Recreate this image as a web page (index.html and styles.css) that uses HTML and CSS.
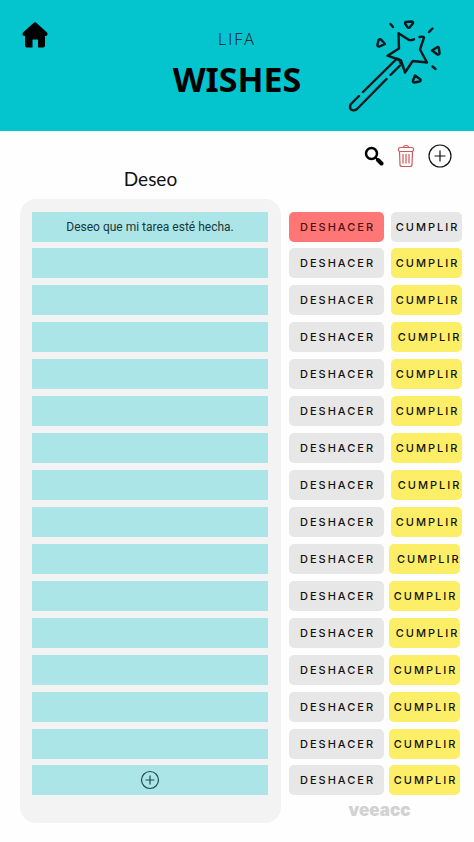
FILE: index.html
```html
<!DOCTYPE html>
<html lang="es">
<head>
<meta charset="UTF-8">
<meta name="viewport" content="width=device-width, initial-scale=1">
<title>LIFA Wishes</title>
<link rel="stylesheet" href="styles.css">
</head>
<body>
<header class="header">
  <a class="home" href="#" aria-label="Inicio">
    <svg width="26" height="26" viewBox="0 0 26 26">
      <path d="M14.500 1 L25 10.500 Q26.500 13.500 23.500 14 H23 V23.500 Q23 25.500 21 25.500 H16 V17.500 H10.500 V25.500 H5 Q3 25.500 3 23.500 V14 H2.500 Q-0.500 13.500 1 10.500 L11.500 1 Q13 -0.300 14.500 1 Z"/>
    </svg>
  </a>
  <div class="brand">
    <p class="brand-name">LIFA</p>
    <h1 class="title">WISHES</h1>
  </div>
  <svg class="wand" width="94" height="94" viewBox="0 0 94 94">
    <!-- star -->
    <path d="M66 21.300 Q63 22.500 61 22 L50.500 15.300 L51 30.500 L39.500 37.700 L53 42.500 L57 54.500 L64.700 43 L79 44.500 L72 31.500 L76 19.500 Q75 18 71.500 19"/>
    <!-- handle -->
    <path d="M47.500 42 L15 74 M11 78 L3 86 Q1 89 3 91.500 Q6 93.500 9 91 L38.500 61 M42.500 57 L52 47.500 M48 41 Q51 40 52.500 45"/>
    <!-- sparkles -->
    <path d="M57.500 4 L64 3.500 Q66 4.500 64.500 6 L61.500 9.500 Q60 10.500 59 8.500 L57 5.500 Z"/>
    <path d="M30.500 22 Q32 20.500 33.500 22 L37 26 L31.500 28.500 Q29 29 29.500 26.500 Z"/>
    <path d="M84 32.500 L89.500 29 Q91 29 91 31 L91.500 35 Q91.500 37 89.500 36.500 Z"/>
    <path d="M67 57.500 L72.500 61.500 Q73 63 71.500 63.500 L66.500 64.500 Q64.500 64.500 65 62.500 Z"/>
    <path d="M34 6.500 M42.500 6 L45 9 M84.500 10.500 L81 14 M84.500 48.500 L87.500 51"/>
  </svg>
</header>

<main class="main">
  <div class="tools">
    <button class="tool" aria-label="Buscar">
      <svg width="20" height="20" viewBox="0 0 20 20">
        <circle cx="7.500" cy="7.500" r="5.500" fill="none" stroke="#000" stroke-width="2.500"/>
        <path d="M11.500 11.500 L13.500 13.500" stroke="#000" stroke-width="2"/>
        <path d="M14 14 L17.500 17.500" stroke="#000" stroke-width="4" stroke-linecap="round"/>
      </svg>
    </button>
    <button class="tool" aria-label="Borrar">
      <svg width="18" height="24" viewBox="0 0 18 24" fill="none" stroke="#d05a5a" stroke-width="1.200">
        <path d="M6.500 3.500 Q6.500 1.500 9 1.500 Q11.500 1.500 11.500 3.500"/>
        <rect x="1.500" y="3.500" width="15" height="4" rx="1.500"/>
        <path d="M2.500 7.500 L3 20.500 Q3 22.500 5 22.500 H13 Q15 22.500 15 20.500 L15.500 7.500 M6 10 V19.500 M9 10 V19.500 M12 10 V19.500"/>
      </svg>
    </button>
    <button class="tool" aria-label="Agregar">
      <svg width="24" height="24" viewBox="0 0 24 24" fill="none" stroke="#111" stroke-width="1.200">
        <circle cx="12" cy="12" r="11"/>
        <path d="M12 6.500 V17.500 M6.500 12 H17.500"/>
      </svg>
    </button>
  </div>

  <h2 class="heading">Deseo</h2>

  <div class="panel rows">
    <input class="row wish" type="text" aria-label="Deseo 1" value="Deseo que mi tarea esté hecha.">
    <input class="row wish" type="text" aria-label="Deseo 2">
    <input class="row wish" type="text" aria-label="Deseo 3">
    <input class="row wish" type="text" aria-label="Deseo 4">
    <input class="row wish" type="text" aria-label="Deseo 5">
    <input class="row wish" type="text" aria-label="Deseo 6">
    <input class="row wish" type="text" aria-label="Deseo 7">
    <input class="row wish" type="text" aria-label="Deseo 8">
    <input class="row wish" type="text" aria-label="Deseo 9">
    <input class="row wish" type="text" aria-label="Deseo 10">
    <input class="row wish" type="text" aria-label="Deseo 11">
    <input class="row wish" type="text" aria-label="Deseo 12">
    <input class="row wish" type="text" aria-label="Deseo 13">
    <input class="row wish" type="text" aria-label="Deseo 14">
    <input class="row wish" type="text" aria-label="Deseo 15">
    <button class="row wish add" aria-label="Agregar deseo">
      <svg width="20" height="20" viewBox="0 0 20 20" fill="none" stroke="#1d4c50" stroke-width="1.200">
        <circle cx="10" cy="10" r="8.500"/>
        <path d="M10 5.500 V14.500 M5.500 10 H14.500"/>
      </svg>
    </button>
  </div>

  <div class="side">
    <div class="rows">
      <div class="row actions"><button class="btn undo active">DESHACER</button><button class="btn grant done">CUMPLIR</button></div>
      <div class="row actions"><button class="btn undo">DESHACER</button><button class="btn grant">CUMPLIR</button></div>
      <div class="row actions"><button class="btn undo">DESHACER</button><button class="btn grant">CUMPLIR</button></div>
      <div class="row actions"><button class="btn undo">DESHACER</button><button class="btn grant indent">CUMPLIR</button></div>
      <div class="row actions"><button class="btn undo">DESHACER</button><button class="btn grant">CUMPLIR</button></div>
      <div class="row actions"><button class="btn undo">DESHACER</button><button class="btn grant">CUMPLIR</button></div>
      <div class="row actions"><button class="btn undo">DESHACER</button><button class="btn grant">CUMPLIR</button></div>
      <div class="row actions"><button class="btn undo">DESHACER</button><button class="btn grant indent">CUMPLIR</button></div>
      <div class="row actions"><button class="btn undo">DESHACER</button><button class="btn grant">CUMPLIR</button></div>
      <div class="row actions near"><button class="btn undo">DESHACER</button><button class="btn grant indent-more">CUMPLIR</button></div>
      <div class="row actions near"><button class="btn undo">DESHACER</button><button class="btn grant">CUMPLIR</button></div>
      <div class="row actions near"><button class="btn undo">DESHACER</button><button class="btn grant indent">CUMPLIR</button></div>
      <div class="row actions near"><button class="btn undo">DESHACER</button><button class="btn grant">CUMPLIR</button></div>
      <div class="row actions near"><button class="btn undo">DESHACER</button><button class="btn grant">CUMPLIR</button></div>
      <div class="row actions near"><button class="btn undo">DESHACER</button><button class="btn grant">CUMPLIR</button></div>
      <div class="row actions near"><button class="btn undo">DESHACER</button><button class="btn grant">CUMPLIR</button></div>
    </div>
    <p class="credit">veeacc</p>
  </div>
</main>
</body>
</html>
```
FILE: styles.css
```css
* {
  box-sizing: border-box;
}

body {
  margin: 0;
  background-color: #fefefe;
  color: #111;
  font-family: Inter, sans-serif;
}

button, input {
  border: none;
  padding: 0;
  font-family: inherit;
  color: inherit;
}

button {
  cursor: pointer;
}

svg {
  display: block;
}

.header {
  display: grid;
  grid-template-columns: 1fr auto 1fr;
  align-items: start;
  padding: 18px 22px 19px;
  background-color: #04c4ce;
}

.home {
  margin-top: 4px;
}

.brand {
  padding-top: 10px;
  text-align: center;
}

.brand-name {
  margin: 0;
  font-family: "Open Sans", sans-serif;
  font-size: 16px;
  font-weight: 300;
  line-height: 22px;
  letter-spacing: 2px;
}

.title {
  margin: 7px 0 0;
  color: #000;
  font-family: "Noto Sans", sans-serif;
  font-size: 34px;
  font-weight: 700;
  line-height: 44px;
}

.wand {
  justify-self: end;
  margin-right: 10px;
  fill: none;
  stroke: #08181c;
  stroke-width: 2.4;
  stroke-linecap: round;
  stroke-linejoin: round;
}

.main {
  display: grid;
  grid-template-columns: 1fr 173px;
  column-gap: 8px;
  padding: 13px 12px 19px 20px;
}

.tools {
  grid-column: 1 / -1;
  display: flex;
  justify-content: flex-end;
  align-items: center;
  gap: 13px;
  padding-right: 10px;
}

.tool {
  background: none;
}

.heading {
  margin: 0 0 9px;
  font-family: Lato, sans-serif;
  font-size: 19px;
  font-weight: 400;
  line-height: 22px;
  text-align: center;
}

.panel {
  grid-column: 1;
  padding: 13px 13px 28px 12px;
  border-radius: 16px;
  background-color: #f3f3f4;
}

.side {
  padding-top: 13px;
}

.rows {
  display: flex;
  flex-direction: column;
}

.row {
  height: 30px;
  margin-top: 7px;
}

.row:first-child {
  margin-top: 0;
}

.row:nth-child(2),
.row:last-child {
  margin-top: 6px;
}

.wish {
  width: 100%;
  background-color: #ace5e7;
  color: #15383b;
  font-family: Roboto, sans-serif;
  font-size: 12px;
  text-align: center;
}

.add {
  display: flex;
  justify-content: center;
  align-items: center;
}

.actions {
  display: flex;
  gap: 7px;
}

.near {
  gap: 5px;
}

.btn {
  border-radius: 5px;
  font-size: 11px;
  font-weight: 500;
  letter-spacing: 2px;
  white-space: nowrap;
}

.undo {
  width: 95px;
  padding-left: 2px;
  background-color: #e7e7e7;
}

.active {
  background-color: #ff7676;
  color: #4a1212;
}

.grant {
  width: 71px;
  padding-left: 2px;
  background-color: #fcee67;
}

.done {
  background-color: #e7e7e7;
}

.indent {
  padding-left: 6px;
}

.indent-more {
  padding-left: 8px;
}

.credit {
  margin: 5px 0 0;
  padding-left: 8px;
  color: #d2d2d2;
  font-size: 17px;
  font-weight: 900;
  line-height: 20px;
  text-align: center;
}
```
